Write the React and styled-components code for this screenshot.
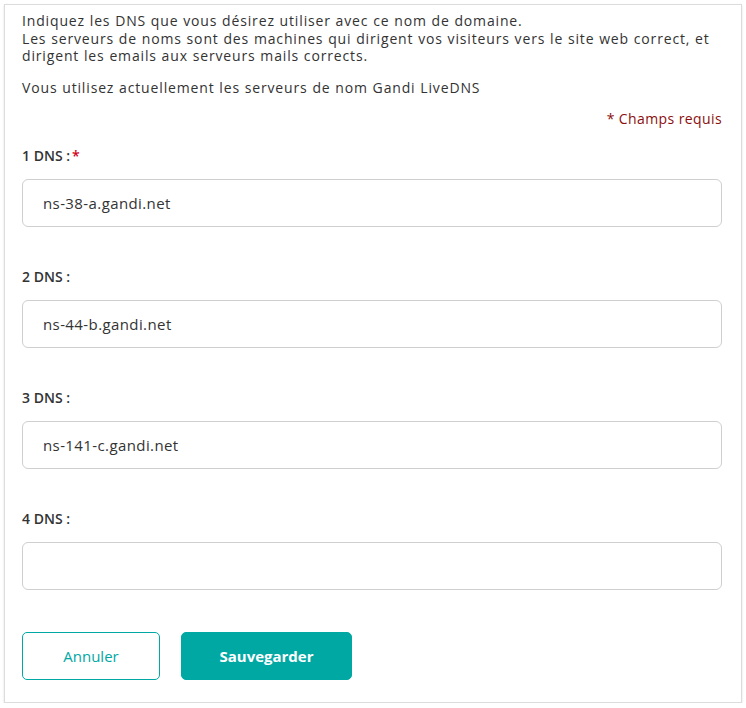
import React from 'react';
import styled, { createGlobalStyle } from 'styled-components';

const GlobalStyle = createGlobalStyle`
  body {
    margin: 0;
    background: #ffffff;
    font-family: "Open Sans", "Noto Sans", Arial, sans-serif;
    color: #333333;
  }
`;

const Panel = styled.div`
  box-sizing: border-box;
  width: 738px;
  margin: 4px 0 0 4px;
  padding: 7px 19px 22px 17px;
  background: #fff;
  border: 1px solid #dcdcdc;
  box-shadow: 0 1px 2px rgba(0, 0, 0, 0.12);
`;

const Text = styled.p`
  margin: 0 0 14px;
  font-size: 14px;
  line-height: 17.5px;
  letter-spacing: 0.85px;
  word-spacing: 0.3px;
  color: #333;
  white-space: nowrap;
`;

const Required = styled.div`
  text-align: right;
  font-size: 14px;
  line-height: 17.5px;
  letter-spacing: 0.4px;
  color: #8b0e0e;
  margin-bottom: 19px;
`;

const Field = styled.div`
  display: flex;
  flex-direction: column;
  gap: 14px;
  margin-bottom: ${p => (p.$last ? '42px' : '41px')};
`;

const Label = styled.label`
  font-size: 14px;
  line-height: 18px;
  font-weight: 600;
  color: #333;
`;

const Star = styled.span`
  color: #d0021b;
  margin-left: 2px;
`;

const Input = styled.input`
  box-sizing: border-box;
  width: 100%;
  height: 48px;
  padding: 0 20px;
  border: 1px solid #cfcfcf;
  border-radius: 6px;
  font-family: inherit;
  font-size: 15px;
  letter-spacing: 0.4px;
  color: #333;
  outline: none;
`;

const Actions = styled.div`
  display: flex;
  gap: 21px;
`;

const Button = styled.button`
  box-sizing: border-box;
  height: 48px;
  width: ${p => p.$width}px;
  border-radius: 5px;
  font-family: inherit;
  font-size: 15px;
  cursor: pointer;
  border: 1px solid #00a8a4;
  background: ${p => (p.$primary ? '#00a8a4' : '#fff')};
  color: ${p => (p.$primary ? '#fff' : '#00a8a4')};
  font-weight: ${p => (p.$primary ? 700 : 400)};
`;

const fields = [
  { n: 1, value: 'ns-38-a.gandi.net', required: true },
  { n: 2, value: 'ns-44-b.gandi.net' },
  { n: 3, value: 'ns-141-c.gandi.net' },
  { n: 4, value: '' },
];

export default function App() {
  return (
    <>
      <GlobalStyle />
      <Panel>
        <Text>
          Indiquez les DNS que vous désirez utiliser avec ce nom de domaine.
          <br />
          Les serveurs de noms sont des machines qui dirigent vos visiteurs vers le site web correct, et
          <br />
          dirigent les emails aux serveurs mails corrects.
        </Text>
        <Text>Vous utilisez actuellement les serveurs de nom Gandi LiveDNS</Text>
        <Required>* Champs requis</Required>
        {fields.map((f, i) => (
          <Field key={f.n} $last={i === fields.length - 1}>
            <Label>
              {f.n} DNS :{f.required && <Star>*</Star>}
            </Label>
            <Input defaultValue={f.value} />
          </Field>
        ))}
        <Actions>
          <Button $width={138}>Annuler</Button>
          <Button $width={171} $primary>Sauvegarder</Button>
        </Actions>
      </Panel>
    </>
  );
}
